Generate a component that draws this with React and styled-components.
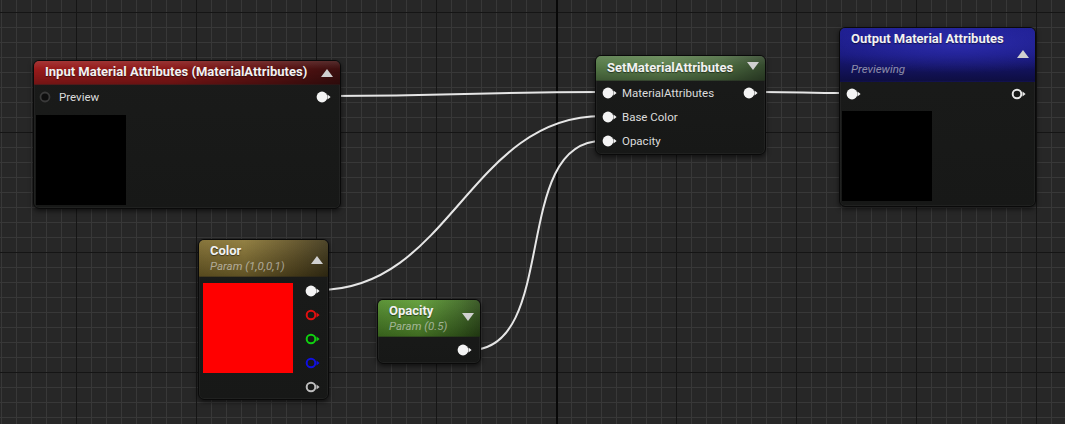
import React from "react";
import styled, { createGlobalStyle, css } from "styled-components";

const GlobalStyle = createGlobalStyle`
  html, body {
    margin: 0;
    padding: 0;
    background: #272727;
    overflow: hidden;
  }
  * { box-sizing: border-box; }
`;

const Canvas = styled.div`
  position: relative;
  width: 1065px;
  height: 424px;
  overflow: hidden;
  font-family: Roboto, "Liberation Sans", sans-serif;
  background-color: #272727;
  background-image:
    linear-gradient(to right, transparent 556px, #080808 556px, #080808 558px, transparent 558px),
    linear-gradient(to right, #151515 1px, transparent 1px),
    linear-gradient(to bottom, #151515 1px, transparent 1px),
    linear-gradient(to right, #383838 1px, transparent 1px),
    linear-gradient(to bottom, #383838 1px, transparent 1px);
  background-size:
    1065px 424px,
    120px 120px,
    120px 120px,
    15px 15px,
    15px 15px;
  background-position:
    0 0,
    76px 12px,
    76px 12px,
    1px 12px,
    1px 12px;
`;

const Wires = styled.svg`
  position: absolute;
  inset: 0;
  width: 1065px;
  height: 424px;
`;

const Node = styled.div`
  position: absolute;
  left: ${(p) => p.$x}px;
  top: ${(p) => p.$y}px;
  width: ${(p) => p.$w}px;
  height: ${(p) => p.$h}px;
  display: flex;
  flex-direction: column;
  background: linear-gradient(180deg, #1a1b1a 0%, #171817 100%);
  border: 1px solid #0a0a0a;
  border-radius: 6px;
  box-shadow: 0 2px 5px rgba(0, 0, 0, 0.6), inset 0 0 0 1px rgba(255, 255, 255, 0.04);
  overflow: hidden;
`;

const tints = {
  red: css`
    background:
      linear-gradient(180deg, rgba(255, 255, 255, 0.12) 0%, rgba(255, 255, 255, 0) 35%, rgba(0, 0, 0, 0.25) 100%),
      linear-gradient(90deg, #9a1b1b 0%, #8a1818 45%, #5a1212 80%, #3c0f0f 100%);
  `,
  sage: css`
    background:
      linear-gradient(180deg, rgba(255, 255, 255, 0.1) 0%, rgba(255, 255, 255, 0) 40%, rgba(0, 0, 0, 0.28) 100%),
      linear-gradient(90deg, #567a48 0%, #5f8350 40%, #4d6c41 75%, #34492d 100%);
  `,
  blue: css`
    background:
      radial-gradient(ellipse 80% 55% at 60% 30%, rgba(46, 46, 178, 0.85) 0%, rgba(40, 40, 150, 0) 100%),
      linear-gradient(180deg, #1e1e90 0%, #18187a 50%, #0e0e42 100%);
  `,
  gold: css`
    background:
      linear-gradient(180deg, rgba(255, 255, 255, 0.08) 0%, rgba(0, 0, 0, 0.3) 100%),
      linear-gradient(90deg, #7d6a2c 0%, #8a7634 35%, #5e4f22 75%, #3f3618 100%);
  `,
  lime: css`
    background:
      linear-gradient(180deg, rgba(255, 255, 255, 0.08) 0%, rgba(0, 0, 0, 0.3) 100%),
      linear-gradient(90deg, #4f8a28 0%, #5b9a30 40%, #3f6c22 80%, #2e4e19 100%);
  `,
};

const Header = styled.div`
  position: relative;
  flex: none;
  height: ${(p) => p.$h}px;
  padding: ${(p) => p.$pad || "4px 26px 0 11px"};
  border-bottom: 1px solid rgba(0, 0, 0, 0.5);
  ${(p) => tints[p.$tint]}
`;

const Title = styled.div`
  color: #f2f2f2;
  font-weight: 700;
  font-size: 13px;
  line-height: 16px;
  white-space: nowrap;
  text-shadow: 0 1px 1px rgba(0, 0, 0, 0.5);
`;

const Subtitle = styled.div`
  color: rgba(225, 225, 225, 0.6);
  font-style: italic;
  font-size: 11.5px;
  line-height: 14px;
  white-space: nowrap;
  margin-top: ${(p) => p.$gap || 0}px;
`;

const Caret = styled.span`
  position: absolute;
  right: ${(p) => p.$r}px;
  top: ${(p) => p.$t}px;
  width: 0;
  height: 0;
  border-left: 6px solid transparent;
  border-right: 6px solid transparent;
  ${(p) =>
    p.$dir === "up"
      ? css`border-bottom: 8px solid #d0d0d0;`
      : css`border-top: 8px solid #d0d0d0;`}
`;

const Body = styled.div`
  flex: 1;
  display: flex;
  flex-direction: ${(p) => (p.$row ? "row" : "column")};
  padding: ${(p) => p.$pad || "0"};
`;

const Row = styled.div`
  display: flex;
  align-items: center;
  height: 24px;
  padding: ${(p) => p.$pad || "0 6px"};
  gap: 4px;
`;

const Label = styled.span`
  color: #dcdcdc;
  font-size: 11.5px;
  line-height: 14px;
  flex: 1;
  white-space: nowrap;
`;

const Preview = styled.div`
  width: 90px;
  height: 90px;
  flex: none;
  background: ${(p) => p.$fill || "#000"};
  margin: ${(p) => p.$m || "0"};
`;

const PinColumn = styled.div`
  display: flex;
  flex-direction: column;
  margin-left: auto;
  padding-right: 7px;
`;

const PinSlot = styled.div`
  height: 24px;
  display: flex;
  align-items: center;
`;

function Pin({ color = "#f4f4f4", hollow = false, dim = false }) {
  if (dim) {
    return (
      <svg width="16" height="12" viewBox="0 0 16 12">
        <circle cx="6" cy="6" r="4.5" fill="#0e0e0e" stroke="#3a3a3a" strokeWidth="1.8" />
      </svg>
    );
  }
  return (
    <svg width="16" height="12" viewBox="0 0 16 12">
      <path d="M11.5 3.4 L14.6 6 L11.5 8.6 Z" fill={color} />
      {hollow ? (
        <circle cx="6" cy="6" r="4.3" fill="none" stroke={color} strokeWidth="2" />
      ) : (
        <circle cx="6" cy="6" r="5.4" fill={color} />
      )}
    </svg>
  );
}

const wires = [
  "M 330 96 C 460 96, 470 92, 602 92",
  "M 319 290 C 450 290, 470 116, 602 116",
  "M 470 350 C 560 350, 510 141, 602 141",
  "M 759 92 C 800 92, 805 93, 846 93",
];

export default function App() {
  return (
    <Canvas>
      <GlobalStyle />
      <Wires>
        {wires.map((d, i) => (
          <path key={i} d={d} fill="none" stroke="#e6e6e6" strokeWidth="2" />
        ))}
      </Wires>

      <Node $x={33} $y={60} $w={308} $h={149}>
        <Header $tint="red" $h={24} $pad="3px 26px 0 11px">
          <Title>Input Material Attributes (MaterialAttributes)</Title>
          <Caret $dir="up" $r={7} $t={8} />
        </Header>
        <Body>
          <Row $pad="0 8px 0 5px">
            <Pin dim />
            <Label>Preview</Label>
            <Pin />
          </Row>
          <Preview $m="6px 0 0 2px" />
        </Body>
      </Node>

      <Node $x={595} $y={55} $w={171} $h={100}>
        <Header $tint="sage" $h={25}>
          <Title>SetMaterialAttributes</Title>
          <Caret $dir="down" $r={6} $t={6} />
        </Header>
        <Body>
          <Row>
            <Pin />
            <Label>MaterialAttributes</Label>
            <Pin />
          </Row>
          <Row>
            <Pin />
            <Label>Base Color</Label>
          </Row>
          <Row>
            <Pin />
            <Label>Opacity</Label>
          </Row>
        </Body>
      </Node>

      <Node $x={839} $y={27} $w={197} $h={180}>
        <Header $tint="blue" $h={54} $pad="3px 26px 0 11px">
          <Title>Output Material Attributes</Title>
          <Subtitle $gap={15}>Previewing</Subtitle>
          <Caret $dir="up" $r={6} $t={22} />
        </Header>
        <Body>
          <Row $pad="0 8px 0 6px">
            <Pin />
            <Label />
            <Pin hollow color="#e8e8e8" />
          </Row>
          <Preview $m="5px 0 0 2px" />
        </Body>
      </Node>

      <Node $x={198} $y={239} $w={131} $h={161}>
        <Header $tint="gold" $h={37} $pad="3px 26px 0 11px">
          <Title>Color</Title>
          <Subtitle>Param (1,0,0,1)</Subtitle>
          <Caret $dir="up" $r={5} $t={16} />
        </Header>
        <Body $row $pad="2px 0 0 0">
          <Preview $fill="#ff0000" $m="4px 0 0 4px" />
          <PinColumn>
            <PinSlot><Pin /></PinSlot>
            <PinSlot><Pin hollow color="#e01010" /></PinSlot>
            <PinSlot><Pin hollow color="#10d010" /></PinSlot>
            <PinSlot><Pin hollow color="#1010e0" /></PinSlot>
            <PinSlot><Pin hollow color="#bdbdbd" /></PinSlot>
          </PinColumn>
        </Body>
      </Node>

      <Node $x={377} $y={299} $w={104} $h={65}>
        <Header $tint="lime" $h={37} $pad="3px 26px 0 11px">
          <Title>Opacity</Title>
          <Subtitle>Param (0.5)</Subtitle>
          <Caret $dir="down" $r={6} $t={13} />
        </Header>
        <Body $pad="1px 0 0 0">
          <PinColumn>
            <PinSlot><Pin /></PinSlot>
          </PinColumn>
        </Body>
      </Node>
    </Canvas>
  );
}
